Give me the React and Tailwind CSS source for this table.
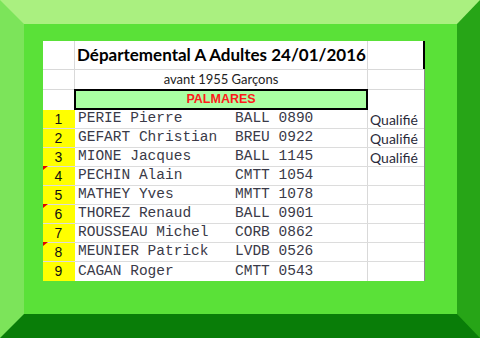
const rows = [
  { n: 1, name: "PERIE Pierre", club: "BALL 0890", q: "Qualifié" },
  { n: 2, name: "GEFART Christian", club: "BREU 0922", q: "Qualifié" },
  { n: 3, name: "MIONE Jacques", club: "BALL 1145", q: "Qualifié" },
  { n: 4, name: "PECHIN Alain", club: "CMTT 1054", mark: true },
  { n: 5, name: "MATHEY Yves", club: "MMTT 1078" },
  { n: 6, name: "THOREZ Renaud", club: "BALL 0901", mark: true },
  { n: 7, name: "ROUSSEAU Michel", club: "CORB 0862" },
  { n: 8, name: "MEUNIER Patrick", club: "LVDB 0526", mark: true },
  { n: 9, name: "CAGAN Roger", club: "CMTT 0543" },
];

const calibri = "font-['Lato','Open_Sans',sans-serif]";

export default function App() {
  return (
    <div className="w-[480px] h-[338px] border-t-[24px] border-l-[24px] border-r-[23px] border-b-[24px] border-t-[#aaf080] border-l-[#7ce45a] border-r-[#27a517] border-b-[#097d08] bg-[#5ae138] pl-[19px] pt-[17px]">
      <div className="w-[382px] bg-white border-r border-[#8a8a8a] relative">
        {/* title row */}
        <div className="flex h-[29px] border-b border-[#d9d9d9]">
          <div className="w-[32px] border-r border-[#d9d9d9]" />
          <div className={`w-[293px] border-r border-[#d9d9d9] pl-[2px] flex items-center text-[17px] font-bold text-black ${calibri}`}>
            Départemental A Adultes 24/01/2016
          </div>
          <div className="flex-1 border-r-2 border-black -mr-[1px]" />
        </div>
        {/* subtitle */}
        <div className="flex h-[20px] border-b border-[#d9d9d9]">
          <div className="w-[32px] border-r border-[#d9d9d9]" />
          <div className={`w-[293px] border-r border-[#d9d9d9] flex items-center justify-center text-[13px] text-[#222] ${calibri}`}>
            avant 1955 Garçons
          </div>
          <div className="flex-1" />
        </div>
        {/* palmares */}
        <div className="flex h-[20px]">
          <div className="w-[31px]" />
          <div className="w-[294px] -mt-[1px] h-[21px] border-2 border-black bg-[#aaffa2] flex items-center justify-center text-[12.5px] font-bold text-[#ff1a1a] font-['Liberation_Sans',sans-serif]">
            PALMARES
          </div>
          <div className="flex-1" />
        </div>
        {/* data */}
        {rows.map((r) => (
          <div key={r.n} className="flex h-[19px] border-b border-[#dcdcdc] last:border-b-0">
            <div className="w-[32px] bg-[#ffff00] relative flex items-center justify-center pr-[1px] text-[14px] text-[#111] font-['Liberation_Sans',sans-serif]">
              {r.mark && (
                <span className="absolute left-0 -top-[1px] w-0 h-0 border-t-[4px] border-t-[#e00000] border-r-[5px] border-r-transparent" />
              )}
              {r.n}
            </div>
            <div className="w-[293px] border-r border-[#d9d9d9] flex items-center pl-[3px] text-[14.5px] text-[#3a3a48] font-['Liberation_Mono',monospace] whitespace-pre">
              <span className="w-[157px]">{r.name}</span>
              <span>{r.club}</span>
            </div>
            <div className={`flex-1 flex items-center pl-[2px] text-[14px] text-[#2a2a3a] ${calibri}`}>
              {r.q}
            </div>
          </div>
        ))}
      </div>
    </div>
  );
}
